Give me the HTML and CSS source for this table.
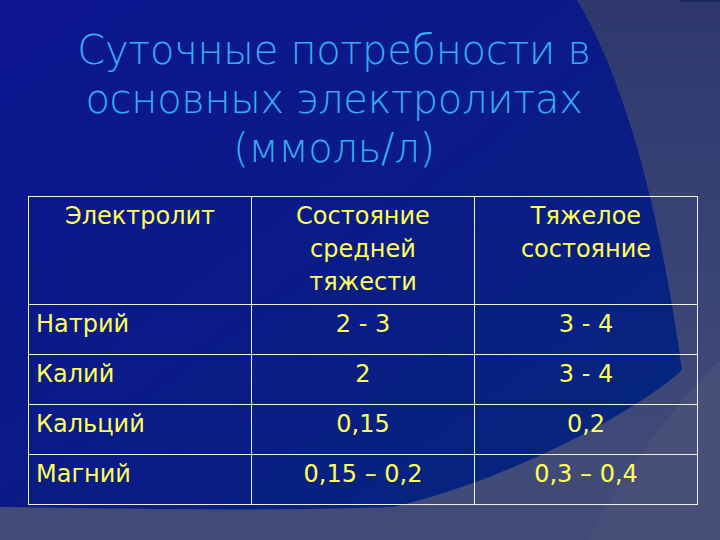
FILE: index.html
```html
<!DOCTYPE html>
<html lang="ru">
<head>
<meta charset="utf-8">
<title>Суточные потребности в основных электролитах</title>
<link rel="stylesheet" href="styles.css">
</head>
<body>
<div class="slide">
  <svg class="backdrop" width="720" height="540" viewBox="0 0 720 540" aria-hidden="true">
    <defs>
      <linearGradient id="gray" x1="0" y1="0" x2="0" y2="1">
        <stop offset="0" stop-color="#2e386e"/>
        <stop offset="0.6" stop-color="#3b4677"/>
        <stop offset="1" stop-color="#434c78"/>
      </linearGradient>
      <linearGradient id="blue" x1="0" y1="0" x2="1" y2="1">
        <stop offset="0" stop-color="#0d1590"/>
        <stop offset="0.55" stop-color="#0a1c86"/>
        <stop offset="1" stop-color="#04297a"/>
      </linearGradient>
    </defs>
    <rect x="0" y="0" width="720" height="540" fill="url(#gray)"/>
    <path d="M588 540 C612 495 650 430 720 360 L720 540 Z" fill="#474f78"/>
    <path d="M0 0 H577 C625 80 660 210 682 370 C640 410 505 482 393 507 C250 512 100 508 0 507 Z" fill="url(#blue)"/>
    <rect x="680" y="0" width="40" height="2" fill="#1a2460"/>
  </svg>
  <div class="content">
    <h1 class="title">Суточные потребности в основных электролитах (ммоль/л)</h1>
    <table class="grid">
      <colgroup><col class="c1"><col class="c2"><col class="c3"></colgroup>
      <tr class="head">
        <td class="name">Электролит</td>
        <td>Состояние средней тяжести</td>
        <td>Тяжелое состояние</td>
      </tr>
      <tr>
        <td class="name left">Натрий</td>
        <td>2 - 3</td>
        <td>3 - 4</td>
      </tr>
      <tr>
        <td class="name left">Калий</td>
        <td>2</td>
        <td>3 - 4</td>
      </tr>
      <tr>
        <td class="name left">Кальций</td>
        <td>0,15</td>
        <td>0,2</td>
      </tr>
      <tr>
        <td class="name left">Магний</td>
        <td>0,15 – 0,2</td>
        <td>0,3 – 0,4</td>
      </tr>
    </table>
  </div>
</div>
</body>
</html>
```

FILE: styles.css
```css
html, body {
  margin: 0;
  padding: 0;
  background: #0d1590;
}

.slide {
  position: relative;
  width: 720px;
  height: 540px;
  overflow: hidden;
}

.backdrop {
  position: absolute;
  left: 0;
  top: 0;
  display: block;
}

.content {
  position: relative;
  display: flex;
  flex-direction: column;
  align-items: flex-start;
  padding-top: 26px;
}

.title {
  margin: 0 0 0 64px;
  width: 540px;
  font-family: "DejaVu Sans", sans-serif;
  font-weight: 200;
  font-size: 40px;
  letter-spacing: -0.3px;
  line-height: 49px;
  color: #36acf2;
  text-align: center;
}

.grid {
  margin: 23px 0 0 28px;
  width: 670px;
  border-collapse: collapse;
  table-layout: fixed;
  font-family: "DejaVu Sans", sans-serif;
  font-size: 24px;
  line-height: 33px;
  color: #ffff55;
}

.grid td {
  border: 1px solid #f0f0f4;
  padding: 3px 6px 0;
  height: 46px;
  vertical-align: top;
  text-align: center;
}

.grid .head td {
  height: 104px;
}

.grid td.left {
  text-align: left;
  padding-left: 7px;
}
```
